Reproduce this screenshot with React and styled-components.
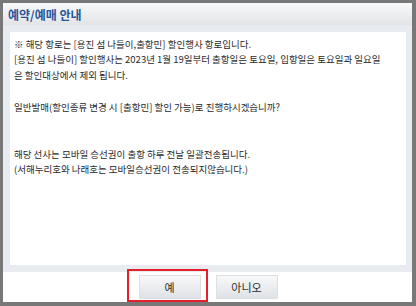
import React from 'react';
import styled, { createGlobalStyle } from 'styled-components';

const GlobalStyle = createGlobalStyle`
    html, body {
        margin: 0;
        padding: 0;
        background: #787878;
    }
    body {
        font-family: "Noto Sans CJK KR", "Noto Sans", sans-serif;
    }
`
const Dialog = styled.div`
    margin: 3px 0 0 3px;
    width: 409px;
    height: 299px;
    background: #ffffff;
    display: flex;
    flex-direction: column;
`
const Header = styled.div`
    height: 22px;
    padding-left: 5px;
    display: flex;
    align-items: center;
    background: linear-gradient(to bottom, #f8f9fa, #e2e4e7);
    color: #2b559b;
    font-size: 12px;
    font-weight: bold;
`
const Body = styled.div`
    background: #e8ecf0;
    padding: 7px 6px 7px 7px;
`
const Message = styled.div`
    background: #ffffff;
    height: 233px;
    padding: 5px 4px 0 4px;
    box-sizing: border-box;
    color: #2a2a2a;
    font-size: 9.5px;
    line-height: 15.3px;
    white-space: nowrap;
`
const Paragraph = styled.p`
    margin: 0;
    margin-top: ${props => props.gap || 0}px;
`
const Footer = styled.div`
    flex: 1;
    display: flex;
    justify-content: center;
    align-items: center;
    gap: 15px;
    padding-left: 1px;
`
const Button = styled.div`
    position: relative;
    width: 62px;
    height: 24px;
    box-sizing: border-box;
    border: 1px solid #dcdfe3;
    background: linear-gradient(to bottom, #f7f8f9, #dfe2e6);
    display: flex;
    align-items: center;
    justify-content: center;
    color: #2a2a2a;
    font-size: 11px;
`
const Highlight = styled.div`
    position: absolute;
    left: -13px;
    right: -8px;
    top: -7px;
    bottom: -4px;
    border: 2px solid #e5202b;
`

const App = () => {
    return (
        <>
            <GlobalStyle />
            <Dialog>
                <Header>예약/예매 안내</Header>
                <Body>
                    <Message>
                        <Paragraph>
                            ※ 해당 항로는 [용진 섬 나들이,출항민] 할인행사 항로입니다.<br />
                            [용진 섬 나들이] 할인행사는 2023년 1월 19일부터 출항일은 토요일, 입항일은 토요일과 일요일<br />
                            은 할인대상에서 제외 됩니다.
                        </Paragraph>
                        <Paragraph gap={17.5}>
                            일반발매(할인종류 변경 시 [출항민] 할인 가능)로 진행하시겠습니까?
                        </Paragraph>
                        <Paragraph gap={31}>
                            해당 선사는 모바일 승선권이 출항 하루 전날 일괄전송됩니다.<br />
                            (서해누리호와 나래호는 모바일승선권이 전송되지않습니다.)
                        </Paragraph>
                    </Message>
                </Body>
                <Footer>
                    <Button>
                        예
                        <Highlight />
                    </Button>
                    <Button>아니오</Button>
                </Footer>
            </Dialog>
        </>
    )
}

export default App;
